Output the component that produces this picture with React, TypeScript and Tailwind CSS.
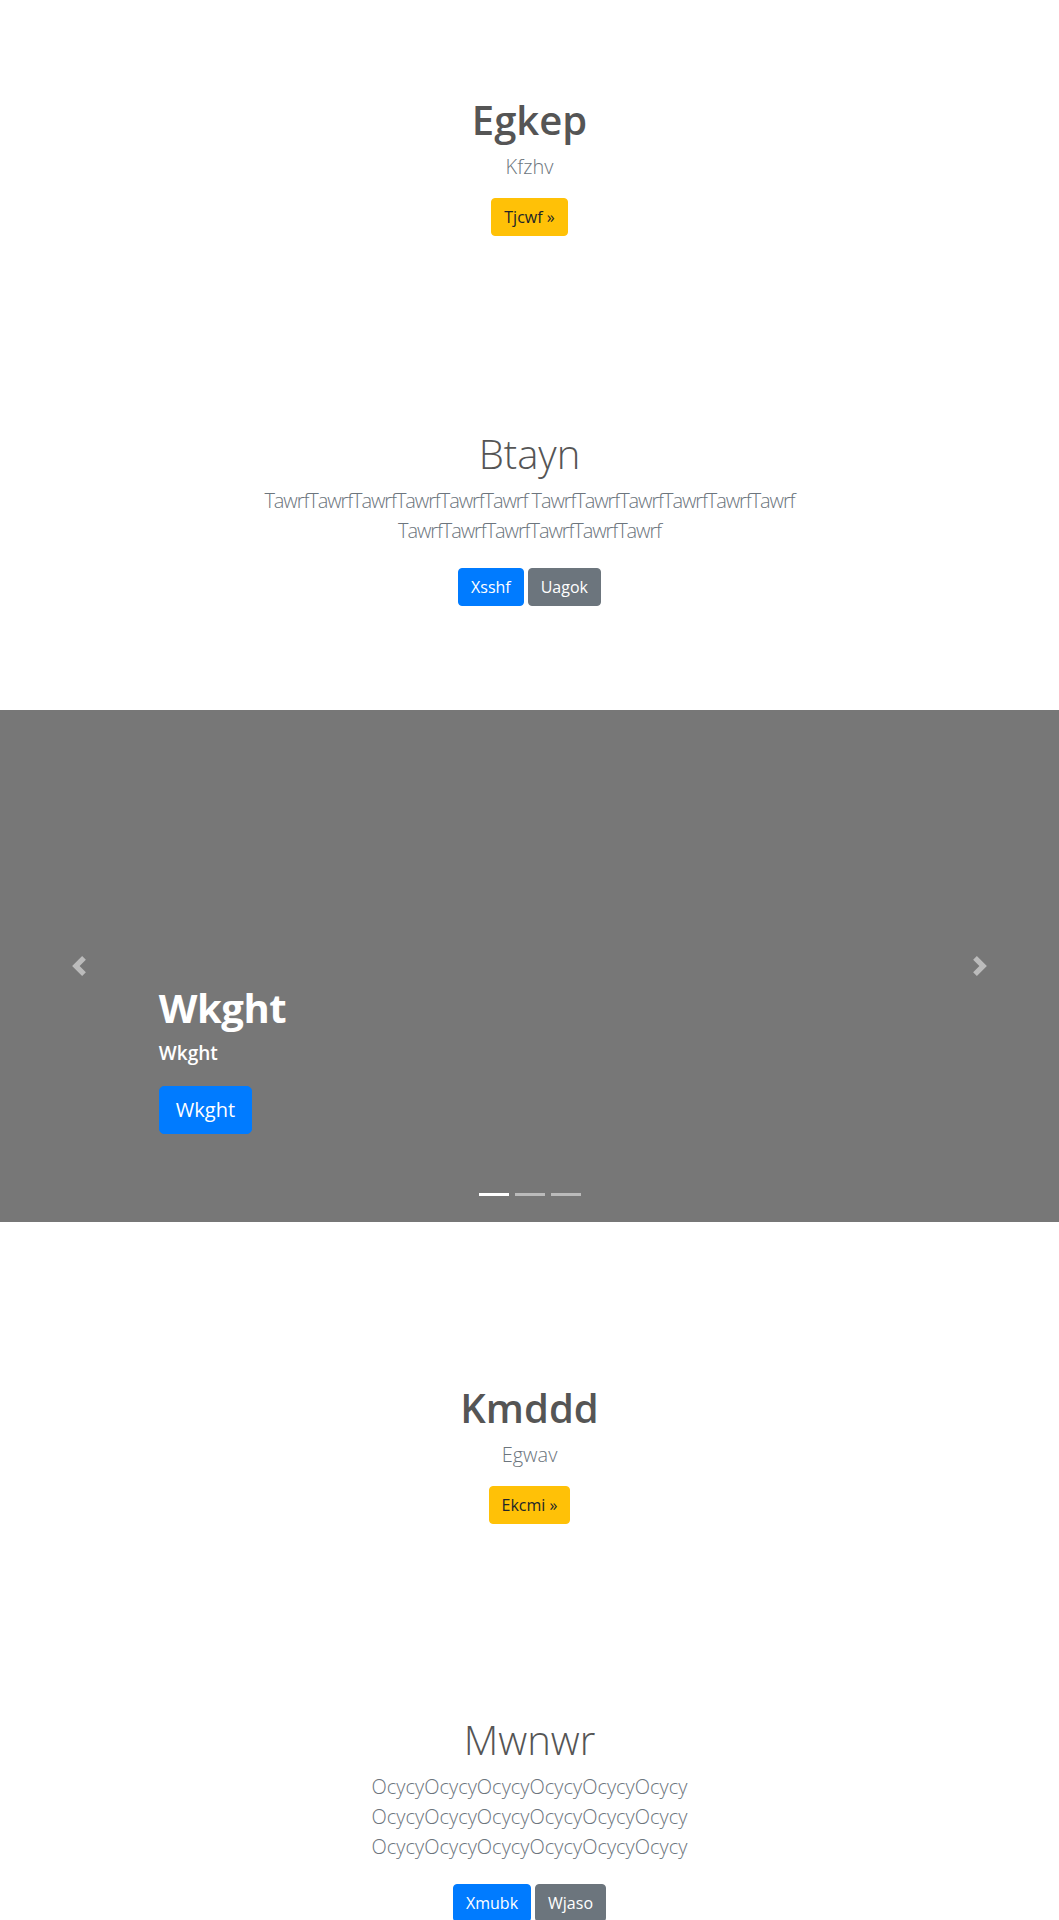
import React from "react";

type BtnProps = {
  children: React.ReactNode;
  color: "warning" | "primary" | "secondary";
  large?: boolean;
};

function Btn({ children, color, large }: BtnProps) {
  const colors = {
    warning: "bg-[#ffc107] border-[#ffc107] text-[#212529]",
    primary: "bg-[#007bff] border-[#007bff] text-white",
    secondary: "bg-[#6c757d] border-[#6c757d] text-white",
  };
  const size = large
    ? "px-4 py-2 text-xl leading-[30px] rounded-[5px]"
    : "px-3 py-1.5 text-base leading-6 rounded";
  return (
    <a href="#" className={`inline-block border ${size} ${colors[color]}`}>
      {children}
    </a>
  );
}

function Chevron({ dir }: { dir: "prev" | "next" }) {
  return (
    <svg width="20" height="20" viewBox="0 0 8 8" fill="#fff">
      {dir === "prev" ? (
        <path d="M5.25 0l-4 4 4 4 1.5-1.5L4.25 4l2.5-2.5L5.25 0z" />
      ) : (
        <path d="M2.75 0l-1.5 1.5L3.75 4l-2.5 2.5L2.75 8l4-4-4-4z" />
      )}
    </svg>
  );
}

function Carousel() {
  return (
    <div className="relative h-[512px] bg-[#777777] overflow-hidden">
      <div className="absolute left-[15%] right-[15%] bottom-12 py-5 text-left text-white">
        <h1 className="text-[40px] leading-[48px] font-bold tracking-[-0.5px] mb-2">Wkght</h1>
        <p className="text-[19px] leading-[27px] font-semibold mb-[19px]">Wkght</p>
        <div className="mb-[20px] flex">
          <Btn color="primary" large>
            Wkght
          </Btn>
        </div>
      </div>

      <a href="#" className="absolute inset-y-0 left-0 w-[15%] flex items-center justify-center opacity-50">
        <Chevron dir="prev" />
      </a>
      <a href="#" className="absolute inset-y-0 right-0 w-[15%] flex items-center justify-center opacity-50">
        <Chevron dir="next" />
      </a>

      <div className="absolute left-0 right-0 bottom-[26px] flex justify-center gap-1.5">
        <span className="w-[30px] h-[3px] bg-white" />
        <span className="w-[30px] h-[3px] bg-white opacity-50" />
        <span className="w-[30px] h-[3px] bg-white opacity-50" />
      </div>
    </div>
  );
}

export default function App() {
  const tawrf = "TawrfTawrfTawrfTawrfTawrfTawrf";
  const ocycy = "OcycyOcycyOcycyOcycyOcycyOcycy";

  return (
    <main className="min-h-screen bg-white text-[#555555] font-['Open_Sans',sans-serif]">
      <section className="pt-[96px] pb-[96px] text-center">
        <h1 className="text-[40px] leading-[48px] font-semibold mb-2">Egkep</h1>
        <p className="text-xl leading-[30px] font-light text-[#6c757d] mb-4">Kfzhv</p>
        <Btn color="warning">Tjcwf »</Btn>
      </section>

      <section className="pt-[98px] pb-[104px] text-center">
        <div className="max-w-[620px] mx-auto">
          <h1 className="text-[40px] leading-[48px] font-light mb-2">Btayn</h1>
          <p className="text-xl leading-[30px] font-light tracking-[-1.1px] text-[#6c757d] mb-[22px]">
            {tawrf} {tawrf} {tawrf}
          </p>
          <div className="flex justify-center gap-1">
            <Btn color="primary">Xsshf</Btn>
            <Btn color="secondary">Uagok</Btn>
          </div>
        </div>
      </section>

      <Carousel />

      <section className="pt-[162px] pb-[96px] text-center">
        <h1 className="text-[40px] leading-[48px] font-semibold mb-2">Kmddd</h1>
        <p className="text-xl leading-[30px] font-light text-[#6c757d] mb-4">Egwav</p>
        <Btn color="warning">Ekcmi »</Btn>
      </section>

      <section className="pt-[96px] pb-[96px] text-center">
        <div className="max-w-[620px] mx-auto">
          <h1 className="text-[40px] leading-[48px] font-light mb-2">Mwnwr</h1>
          <p className="text-xl leading-[30px] font-light text-[#6c757d] mb-[22px]">
            {ocycy} {ocycy} {ocycy}
          </p>
          <div className="flex justify-center gap-1">
            <Btn color="primary">Xmubk</Btn>
            <Btn color="secondary">Wjaso</Btn>
          </div>
        </div>
      </section>
    </main>
  );
}
